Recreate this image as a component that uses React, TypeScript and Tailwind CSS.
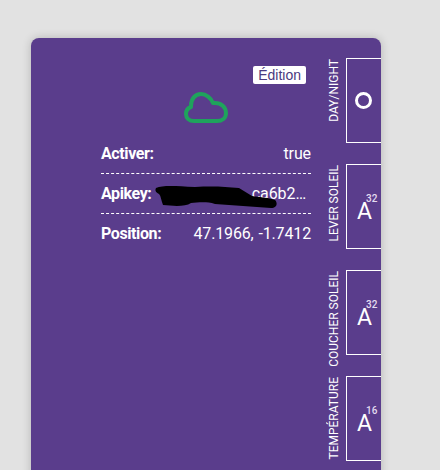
import React from "react";

const widgets = [
  { label: "DAY/NIGHT", value: "", circle: true },
  { label: "LEVER SOLEIL", value: "32" },
  { label: "COUCHER SOLEIL", value: "32" },
  { label: "TEMPÉRATURE", value: "16" },
];

function Widget({ label, value, circle }: { label: string; value: string; circle?: boolean }) {
  return (
    <div className="flex h-[85px] shrink-0">
      <div className="flex w-[14px] items-start justify-center mr-[5px] pt-[1px]">
        <span className="whitespace-nowrap text-[12px] leading-[14px] text-white [writing-mode:vertical-rl] rotate-180">{label}</span>
      </div>
      <div className="relative w-[60px] h-[85px] shrink-0 border border-white">
        {circle ? (
          <div className="absolute left-[8px] top-[33px] w-[17px] h-[17px] rounded-full border-[3px] border-white" />
        ) : (
          <>
            <span className="absolute left-[10px] top-[39px] text-[23px] leading-[15px] text-white">A</span>
            <span className="absolute left-[19px] top-[30px] text-[10px] leading-[8px] font-medium text-[#e4dcf0]">{value}</span>
          </>
        )}
      </div>
    </div>
  );
}

function Row({ label, children, border }: { label: string; children: React.ReactNode; border?: boolean }) {
  return (
    <div className={`flex h-[40px] items-center justify-between text-[16px] leading-[18px] text-white ${border ? "border-b border-dashed border-white" : ""}`}>
      <span className="font-bold tracking-[-0.4px]">{label}</span>
      {children}
    </div>
  );
}

export default function App() {
  return (
    <div className="h-[470px] overflow-hidden bg-[#e2e2e2] pl-[31px] pt-[38px] font-['Roboto',sans-serif]">
      <div className="flex h-[460px] w-[350px] overflow-hidden rounded-t-[8px] bg-[#5a3d8c] shadow-[0_0_10px_rgba(0,0,0,0.2)]">
        <div className="flex w-[280px] shrink-0 flex-col">
          <div className="flex justify-end pt-[28px] pr-[5px]">
            <button className="h-[18px] rounded-[2px] bg-white px-[5px] text-[14px] leading-[18px] text-[#4a3a80] font-['Liberation_Sans',sans-serif]">Édition</button>
          </div>
          <div className="flex justify-center pl-[70px] pt-[8px]">
            <svg width="44" height="31" viewBox="0 0 44 31" fill="none" stroke="#1fa35c" strokeWidth="4" strokeLinejoin="round">
              <path d="M10 29 H33 C38 29 42 26 42 21 C42 15 37 11 31 11 L29 11 C27 6 22 2 17 2 C11 2 7 7 7 14 L7 15 C4 16 2 19 2 22 C2 26 5 29 10 29 Z" />
            </svg>
          </div>
          <div className="ml-[70px] mt-[11px] flex w-[210px] flex-col">
            <Row label="Activer:" border>
              <span className="tracking-[-0.1px]">true</span>
            </Row>
            <Row label="Apikey:" border>
              <div className="relative flex-1 pr-[5px] text-right">
                <span className="tracking-[-0.1px]">ca6b2…</span>
                <svg className="absolute left-[4px] top-[1px]" width="124" height="24" viewBox="0 0 124 24" fill="#000">
                  <path d="M1 2 C8 -1 20 0 40 1 C60 0 70 1 84 2 L97 10 C105 11 115 12 120 14 C123 17 122 22 116 22 L60 18 C50 15 42 17 36 17 C30 21 18 20 8 19 C6 14 6 10 4 8 C0 6 0 4 1 2 Z" />
                </svg>
              </div>
            </Row>
            <Row label="Position:">
              <span className="tracking-[-0.15px] [word-spacing:1px]">47.1966, -1.7412</span>
            </Row>
          </div>
        </div>
        <div className="flex flex-col gap-[21px] pt-[20px] pl-[16px]">
          {widgets.map((w) => (
            <Widget key={w.label} {...w} />
          ))}
        </div>
      </div>
    </div>
  );
}
